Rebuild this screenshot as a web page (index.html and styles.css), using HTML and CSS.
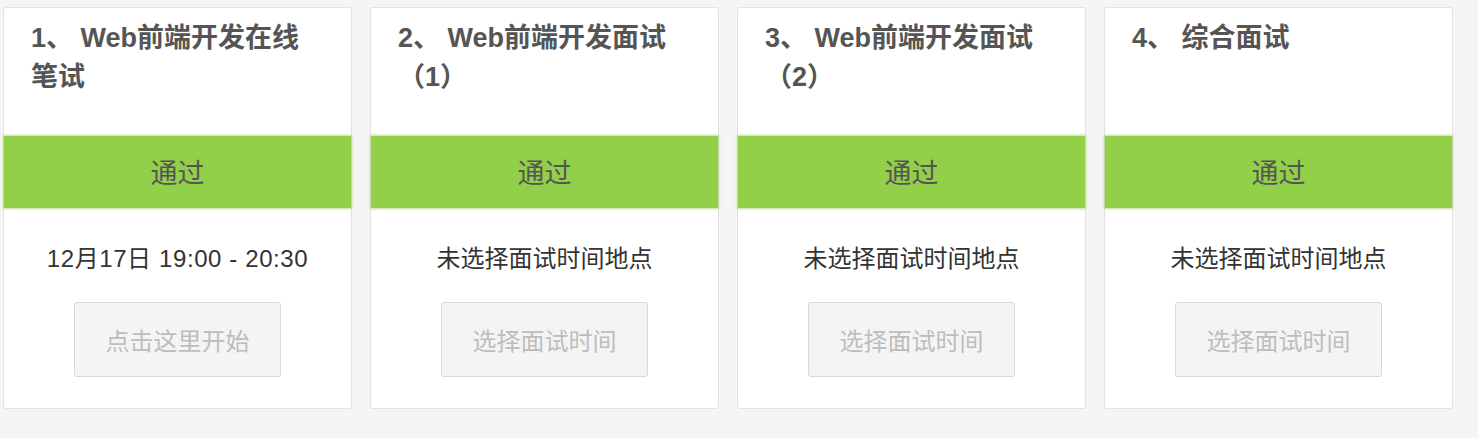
FILE: index.html
```html
<!DOCTYPE html>
<html lang="zh-CN">
<head>
<meta charset="utf-8">
<title>面试流程</title>
<link rel="stylesheet" href="styles.css">
</head>
<body>
<div class="steps">
  <div class="card">
    <div class="card-head">1、 Web前端开发在线笔试</div>
    <div class="status">通过</div>
    <div class="info info-date">12月17日 19:00 - 20:30</div>
    <button class="action">点击这里开始</button>
  </div>
  <div class="card">
    <div class="card-head">2、 Web前端开发面试（1）</div>
    <div class="status">通过</div>
    <div class="info">未选择面试时间地点</div>
    <button class="action">选择面试时间</button>
  </div>
  <div class="card">
    <div class="card-head">3、 Web前端开发面试（2）</div>
    <div class="status">通过</div>
    <div class="info">未选择面试时间地点</div>
    <button class="action">选择面试时间</button>
  </div>
  <div class="card">
    <div class="card-head">4、 综合面试</div>
    <div class="status">通过</div>
    <div class="info">未选择面试时间地点</div>
    <button class="action">选择面试时间</button>
  </div>
</div>
</body>
</html>
```

FILE: styles.css
```css
html, body {
  margin: 0;
  background: #f5f5f5;
}
body {
  padding: 7px 0 0 3px;
  font-family: "Liberation Sans", "Noto Sans CJK SC", sans-serif;
  color: #333;
}
.steps {
  display: grid;
  grid-template-columns: repeat(4, 349px);
  column-gap: 18px;
  align-items: start;
}
.card {
  background: #fff;
  border: 1px solid #e3e3e3;
  border-radius: 2px;
  display: flex;
  flex-direction: column;
  align-items: center;
  padding-bottom: 31px;
}
.card-head {
  align-self: stretch;
  box-sizing: border-box;
  height: 128px;
  padding: 11px 35px 0 27px;
  font-size: 27px;
  line-height: 39px;
  font-weight: bold;
  color: #555;
}
.status {
  align-self: stretch;
  box-sizing: border-box;
  height: 72px;
  padding-top: 4px;
  line-height: 68px;
  background: #92d04a;
  box-shadow: 0 0 2px 1px rgba(146, 208, 74, 0.6);
  text-align: center;
  font-size: 27px;
  color: #555;
}
.info {
  margin-top: 33px;
  height: 36px;
  line-height: 36px;
  font-size: 24px;
  color: #333;
  text-align: center;
}
.info-date {
  letter-spacing: 0.6px;
}
.action {
  margin-top: 25px;
  width: 207px;
  height: 75px;
  box-sizing: border-box;
  background: #f4f4f4;
  border: 1px solid #d8d8d8;
  border-radius: 3px;
  font-family: inherit;
  font-size: 24px;
  color: #bdbdbd;
  padding: 0;
}
```
